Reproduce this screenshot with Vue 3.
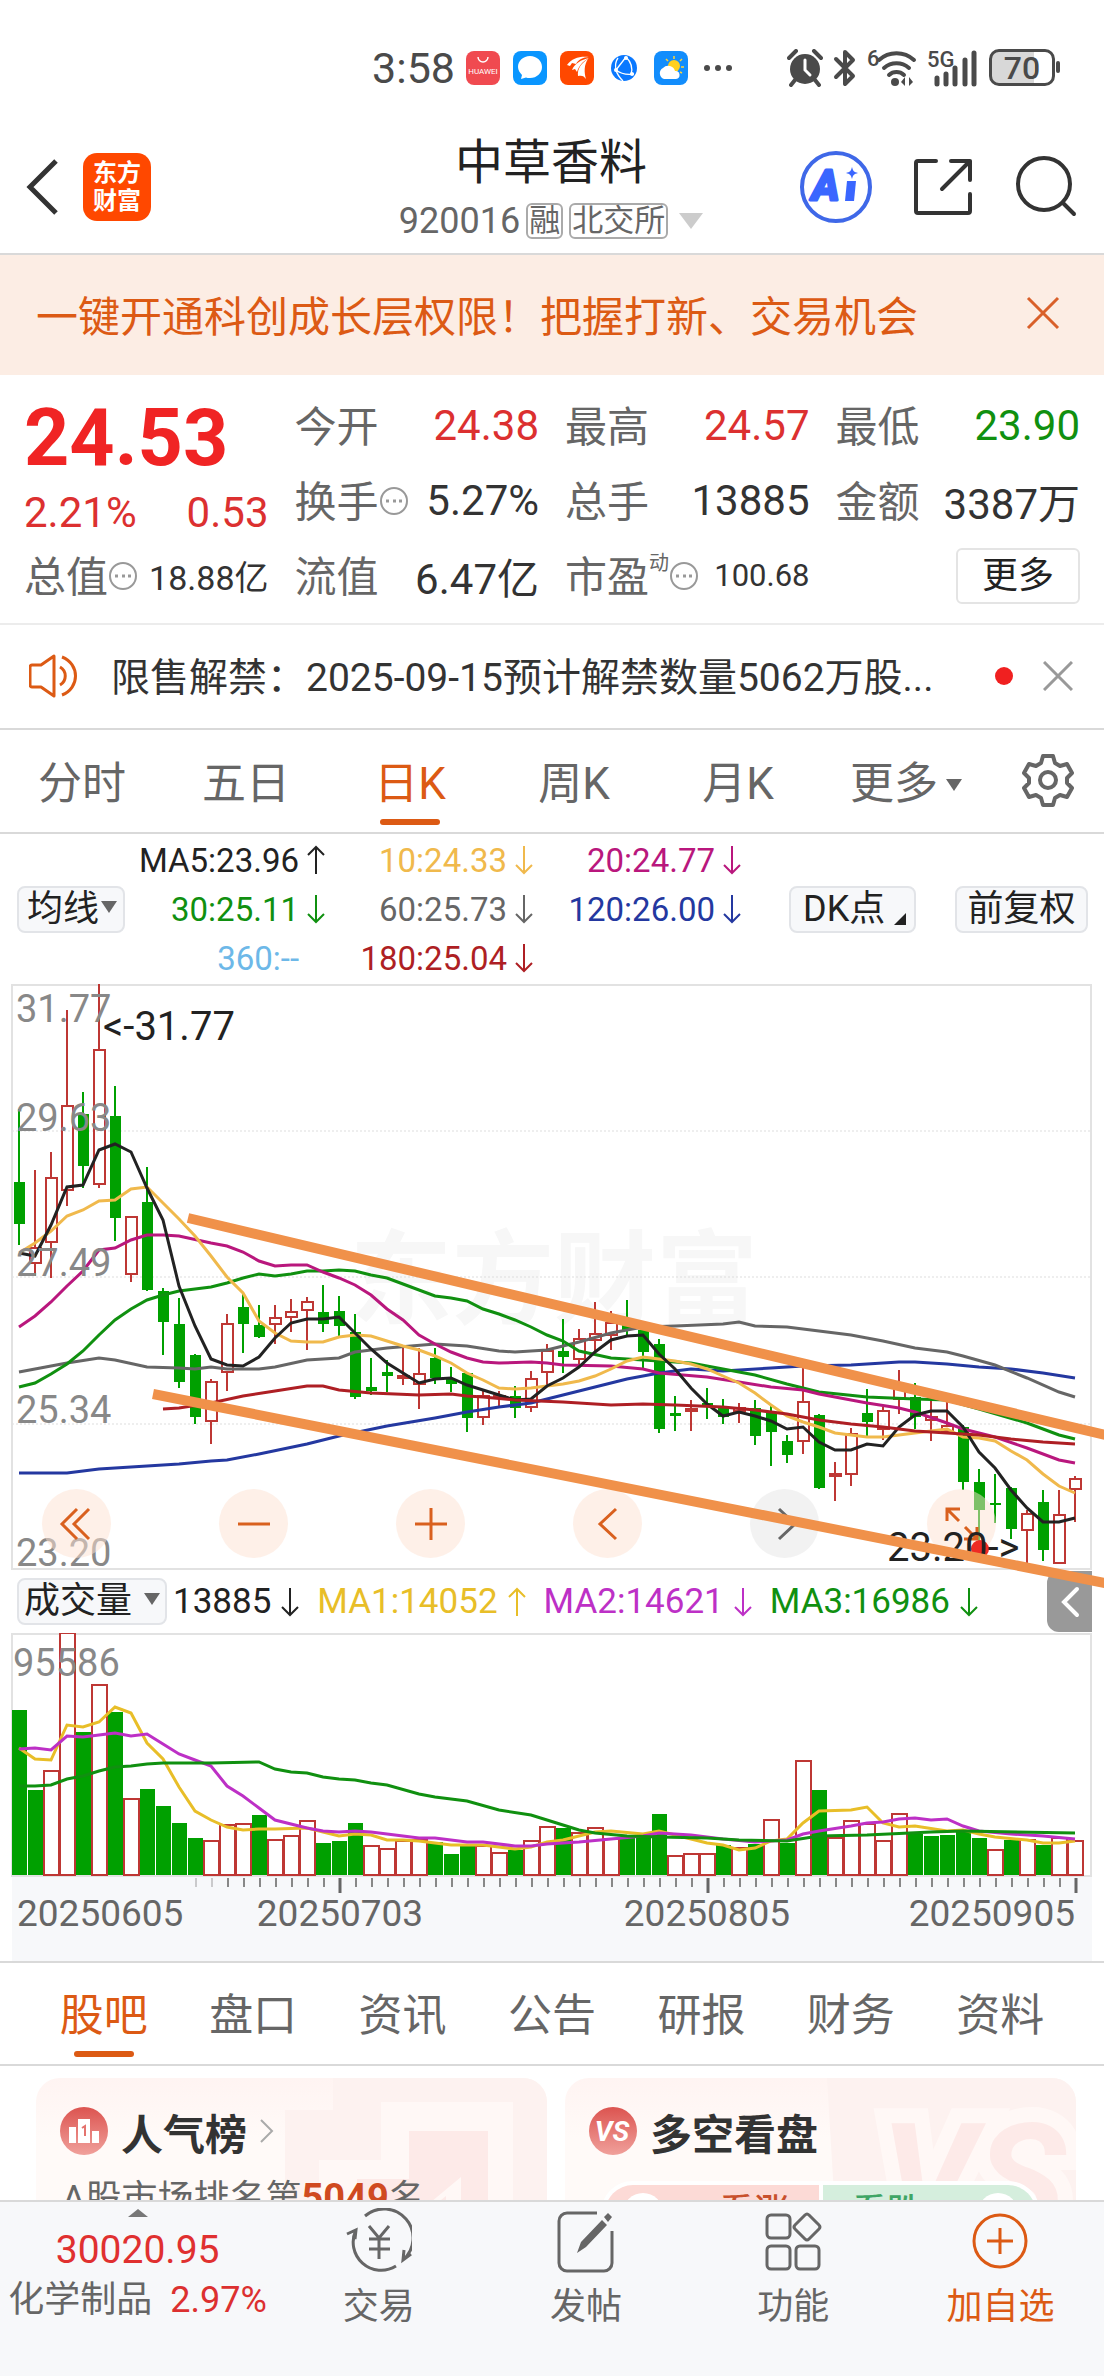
<template>
  <div class="app">
    <div class="status-bar">
      <span class="time">3:58</span>
      <div class="status-apps">
        <svg width="34" height="34" viewBox="0 0 34 34">
          <rect width="34" height="34" rx="8" fill="#f04a50" />
          <path d="M12 6a5 5 0 0 0 10 0" fill="none" stroke="#fff" stroke-width="1.4" />
          <text x="17" y="23" class="huawei">HUAWEI</text>
        </svg>
        <svg width="34" height="34" viewBox="0 0 34 34">
          <rect width="34" height="34" rx="8" fill="#0a96ff" />
          <path d="M17 5c7 0 12 5 12 11s-5 11-12 11c-2 0-3 0-4-.500L8 28l1-4c-2-2-4-5-4-8C5 10 10 5 17 5z" fill="#fff" />
        </svg>
        <svg width="34" height="34" viewBox="0 0 34 34">
          <rect width="34" height="34" rx="8" fill="#ff4800" />
          <path d="M7 14C12 7 20 5 29 6c-6 0-11 3-13 7l-4-1-2 3z M12 19c3-7 9-10 17-12-7 4-10 8-12 14l-2-3z M18 25c-1-8 4-13 10-17-4 6-4 13-2 20-2-3-4-4-8-3z" fill="#fff" />
        </svg>
        <svg width="34" height="34" viewBox="0 0 34 34">
          <circle cx="17" cy="17" r="13" fill="#0a78ff" />
          <path d="M9 19 19 6M9 19c5 4 11 5 18 4M19 6c5 5 7 11 5 17M9 19c-1-5-1-8 2-12M9 19c1 4 4 8 7 11" fill="none" stroke="#fff" stroke-width="1.300" />
          <circle cx="9" cy="19" r="2" fill="#fff" />
          <circle cx="19" cy="7" r="2" fill="#fff" />
          <circle cx="25" cy="23" r="2" fill="#fff" />
        </svg>
        <svg width="34" height="34" viewBox="0 0 34 34">
          <rect width="34" height="34" rx="8" fill="#128dfc" />
          <path d="M20 5v3M12 8l2 2M28 8l-2 2M30 16h-3M28 22l-2-1" stroke="#ffd338" stroke-width="1.500" />
          <circle cx="20" cy="15" r="6" fill="#ffd01e" />
          <path d="M10 28a6 6 0 0 1-1-11 7 7 0 0 1 12 3 4 4 0 0 1 1 8z" fill="#fff" />
        </svg>
      </div>
      <span class="dots"><i></i><i></i><i></i></span>
      <div class="status-sys">
        <svg width="36" height="38" viewBox="0 0 36 38">
          <circle cx="18" cy="20" r="15" fill="#4a4a4a" />
          <path d="M2 9l7-7M34 9l-7-7M8 31l-4 5M28 31l4 5" stroke="#4a4a4a" stroke-width="4" stroke-linecap="round" />
          <path d="M18 11v10l5 5" fill="none" stroke="#fff" stroke-width="3" stroke-linecap="round" />
        </svg>
        <svg width="24" height="38" viewBox="0 0 24 38">
          <path d="M3 10l17 17-8 8V3l8 8L3 28" fill="none" stroke="#4a4a4a" stroke-width="4" stroke-linejoin="round" stroke-linecap="round" />
        </svg>
        <svg width="50" height="38" viewBox="0 0 50 38">
          <text x="0" y="17" class="tiny">6</text>
          <path d="M12 11a26 26 0 0 1 35 0M17 19a19 19 0 0 1 25 0M22 26a11 11 0 0 1 15 0" fill="none" stroke="#4a4a4a" stroke-width="4" stroke-linecap="round" />
          <circle cx="28" cy="33" r="4" fill="#4a4a4a" />
          <path d="M38 28v9l-4-4zM42 37v-9l4 5z" fill="#4a4a4a" />
        </svg>
        <svg width="52" height="38" viewBox="0 0 52 38">
          <text x="0" y="18" class="tiny">5G</text>
          <path d="M10 35v-6M19 35V25M28 35V19M38 35V11M47 35V4" stroke="#4a4a4a" stroke-width="5" stroke-linecap="round" />
        </svg>
        <div class="battery">70</div>
      </div>
    </div>

    <header class="header">
      <button class="icon-btn" aria-label="返回">
        <svg width="36" height="58" viewBox="0 0 36 58">
          <path d="M32 3 6 29l26 26" fill="none" stroke="#333" stroke-width="5" />
        </svg>
      </button>
      <a class="brand" href="#"><span>东方</span><span>财富</span></a>
      <div class="title-box">
        <h1>中草香料</h1>
        <div class="code-row">
          <span class="code">920016</span>
          <span class="tag">融</span>
          <span class="tag">北交所</span>
          <svg width="24" height="16" viewBox="0 0 24 16"><path d="M0 0h24L12 16z" fill="#ccc" /></svg>
        </div>
      </div>
      <div class="header-actions">
        <button class="icon-btn" aria-label="AI">
          <svg width="74" height="74" viewBox="0 0 74 74">
            <circle cx="37" cy="37" r="34" fill="none" stroke="#3f68e8" stroke-width="4" />
            <text x="13" y="50" class="ai">A</text>
            <path d="M48 31h9l-2 20h-9z" fill="#3a66ff" />
            <path d="M53 17c1 4 2 5 6 6-4 1-5 2-6 6-1-4-2-5-6-6 4-1 5-2 6-6z" fill="#3a66ff" />
          </svg>
        </button>
        <button class="icon-btn" aria-label="分享">
          <svg width="62" height="62" viewBox="0 0 62 62">
            <path d="M23 5H5a2 2 0 0 0-2 2v48a2 2 0 0 0 2 2h50a2 2 0 0 0 2-2V38M38 5h19v19M57 5 29 33" fill="none" stroke="#333" stroke-width="4" stroke-linecap="round" stroke-linejoin="round" />
          </svg>
        </button>
        <button class="icon-btn" aria-label="搜索">
          <svg width="62" height="62" viewBox="0 0 62 62">
            <circle cx="29" cy="28" r="26" fill="none" stroke="#333" stroke-width="4" />
            <path d="M48 47l11 11" stroke="#333" stroke-width="4" stroke-linecap="round" />
          </svg>
        </button>
      </div>
    </header>

    <main class="content">
      <div class="banner">
        <a href="#">一键开通科创成长层权限！把握打新、交易机会</a>
        <button class="icon-btn" aria-label="关闭">
          <svg width="34" height="34" viewBox="0 0 34 34"><path d="M2 2l30 30M32 2 2 32" stroke="#d9602a" stroke-width="3" /></svg>
        </button>
      </div>

      <section class="quote">
        <div class="price-box">
          <div class="price">24.53</div>
          <div class="change"><span>2.21%</span><span>0.53</span></div>
        </div>
        <div v-for="q in quotes" :key="q.label" class="cell">
          <span class="label">{{ q.label }}<sup v-if="q.sup">{{ q.sup }}</sup></span>
          <svg v-if="q.info" class="info" width="30" height="30" viewBox="0 0 30 30">
            <circle cx="15" cy="15" r="13" fill="none" stroke="#999" stroke-width="2" />
            <path d="M7 15h3M14 15h3M20 15h3" stroke="#999" stroke-width="3" />
          </svg>
          <span class="value" :class="[q.color, q.size]">{{ q.value }}</span>
        </div>
        <div class="cell more-cell"><button class="more-btn">更多</button></div>
      </section>

      <div class="notice">
        <svg width="52" height="46" viewBox="0 0 52 46">
          <path d="M3 12h9L25 3v40L12 34H3c-1 0-2-1-2-2V14c0-1 1-2 2-2z" fill="none" stroke="#dc5a14" stroke-width="3" stroke-linejoin="round" />
          <path d="M31 14c7 4 7 14 0 18M33 4c18 7 18 31 0 38" fill="none" stroke="#dc5a14" stroke-width="3" />
        </svg>
        <a class="notice-text" href="#">限售解禁：2025-09-15预计解禁数量5062万股...</a>
        <i class="red-dot"></i>
        <button class="icon-btn" aria-label="关闭">
          <svg width="30" height="30" viewBox="0 0 30 30"><path d="M1 1l28 28M29 1 1 29" stroke="#999" stroke-width="3" /></svg>
        </button>
      </div>

      <nav class="period-tabs">
        <button v-for="p in periods" :key="p" :class="{ active: p === period }" @click="period = p">{{ p }}</button>
        <button class="more-period">更多<i class="caret"></i></button>
        <button class="gear" aria-label="设置">
          <svg width="54" height="54" viewBox="0 0 54 54">
            <path d="M22 3h10l2 7 5 3 7-2 5 9-5 5v5l5 5-5 9-7-2-5 3-2 7H22l-2-7-5-3-7 2-5-9 5-5v-5l-5-5 5-9 7 2 5-3z" fill="none" stroke="#666" stroke-width="4" stroke-linejoin="round" />
            <circle cx="27" cy="27" r="8" fill="none" stroke="#666" stroke-width="4" />
          </svg>
        </button>
      </nav>

      <section class="legend">
        <button class="chip ma-chip">均线<i class="caret"></i></button>
        <div class="ma-grid">
          <span v-for="m in maLegend" :key="m.text" :class="m.color">
            {{ m.text }}
            <svg class="arrow" viewBox="0 0 18 30"><path :d="arrows[m.dir]" /></svg>
          </span>
        </div>
        <button class="chip dk">DK点<i class="corner"></i></button>
        <button class="chip adjust">前复权</button>
      </section>

      <section class="charts">
        <svg class="plot" viewBox="0 0 1104 586">
          <text x="350" y="332" class="watermark">东方财富</text>
          <path d="M12 147H1091M12 293H1091M12 440H1091" class="grid-line" />
          <path d="M12 1H1091V585H12z" class="frame" />
          <g v-for="(c, i) in candles" :key="i" :class="c[0] ? 'up' : 'down'">
            <path :d="`M${toX(i)} ${toY(c[1])}V${toY(c[2])}M${toX(i)} ${toY(c[3])}V${toY(c[4])}`" />
            <rect :x="toX(i) - 5" :y="toY(c[2])" width="11" :height="Math.max(toY(c[3]) - toY(c[2]), 2)" />
          </g>
          <polyline v-for="l in priceLines" :key="l.color" :points="toPoints(l.data, toY)" class="ma" :class="l.color" />
          <text v-for="t in priceTicks" :key="t.y" x="16" :y="t.y" class="tick-text">{{ t.text }}</text>
          <text x="103" y="56" class="mark">&lt;-31.77</text>
        </svg>

        <div class="tools">
          <button v-for="t in tools" :key="t.name" :class="{ off: t.off }" :aria-label="t.name">
            <svg width="36" height="36" viewBox="0 0 36 36"><path :d="t.d" /></svg>
          </button>
        </div>

        <div class="volume-head">
          <button class="chip">成交量<i class="caret"></i></button>
          <span v-for="v in volumeLegend" :key="v.text" :class="v.color">
            {{ v.text }}
            <svg class="arrow" viewBox="0 0 18 30"><path :d="arrows[v.dir]" /></svg>
          </span>
          <button class="drawer" aria-label="展开">
            <svg width="20" height="32" viewBox="0 0 20 32"><path d="M17 3 4 16l13 13" fill="none" stroke="#fff" stroke-width="4" stroke-linecap="round" /></svg>
          </button>
        </div>

        <svg class="plot" viewBox="0 0 1104 244">
          <path d="M12 1H1091V243H12z" class="frame" />
          <rect
            v-for="(v, i) in volumes"
            :key="i"
            :class="v > 0 ? 'bar-up' : 'bar-down'"
            :x="12 + i * 16"
            :y="toVolY(Math.abs(v))"
            width="15"
            :height="242 - toVolY(Math.abs(v))"
          />
          <polyline v-for="l in volumeLines" :key="l.color" :points="toPoints(l.data, toVolY)" class="ma" :class="l.color" />
          <text x="13" y="43" class="tick-text">95586</text>
        </svg>

        <svg class="plot axis" viewBox="0 0 1104 84">
          <rect x="12" width="1080" height="84" fill="#f7f8fa" />
          <path
            v-for="i in axisTicks"
            :key="i"
            :d="majors.includes(i) ? `M${toX(i) + 1} 1v15` : `M${toX(i) + 1} 1v9`"
            :class="{ major: majors.includes(i), faint: i < 13 }"
          />
          <text x="17" y="49">20250605</text>
          <text x="340" y="49" text-anchor="middle">20250703</text>
          <text x="707" y="49" text-anchor="middle">20250805</text>
          <text x="1075" y="49" text-anchor="end">20250905</text>
        </svg>

        <!-- hand-drawn channel, runs past the plot frame -->
        <svg class="trend" viewBox="0 0 1104 620">
          <circle cx="980" cy="565" r="9" fill="#ee2a24" />
          <text x="887" y="577" class="mark">23.20-&gt;</text>
          <path d="M188 234 1110 452M153 410 1110 600" />
        </svg>
      </section>

      <nav class="info-tabs">
        <button v-for="s in sections" :key="s" :class="{ active: s === section }" @click="section = s">{{ s }}</button>
      </nav>

      <section class="cards">
        <article class="card">
          <svg class="card-art" width="511" height="200" viewBox="0 0 511 200">
            <path d="M249 200V32h48V0h214v200z" fill="#fdf2f0" />
            <path d="M283 200V82h62V24h132v176z" fill="#fff8f6" />
            <path d="M321 200v-99h52V53h79v147z" fill="#fdeae8" />
            <path d="M395 124l30-25v101h-15v-82l-15 12z" fill="#fff8f6" />
          </svg>
          <h2>
            <svg width="48" height="48" viewBox="0 0 48 48">
              <defs>
                <linearGradient id="badge" x1="0" y1="0" x2="0" y2="1">
                  <stop offset="0" stop-color="#dc5450" />
                  <stop offset="1" stop-color="#f0a09b" />
                </linearGradient>
              </defs>
              <circle cx="24" cy="24" r="24" fill="url(#badge)" />
              <path d="M9 20h7v16H9zM18 12h12v24H18zM32 24h7v12h-7z" fill="#fff" />
              <path d="M22 21l3-2v10" fill="none" stroke="#e4736e" stroke-width="2" />
            </svg>
            人气榜
            <svg width="14" height="26" viewBox="0 0 14 26"><path d="M1 2l11 11L1 24" fill="none" stroke="#aaa" stroke-width="2" /></svg>
          </h2>
          <p class="rank">A股市场排名第<b>5049</b>名</p>
        </article>
        <article class="card">
          <svg class="card-art" width="511" height="200" viewBox="0 0 511 200">
            <path d="M262 0h249v200H274z" fill="#fdf2f0" />
            <text x="316" y="152" class="vs-art">VS</text>
          </svg>
          <h2>
            <svg width="48" height="48" viewBox="0 0 48 48">
              <circle cx="24" cy="24" r="24" fill="url(#badge)" />
              <text x="23" y="34" class="vs">VS</text>
            </svg>
            多空看盘
          </h2>
          <div class="vote">
            <button class="rise"><i></i>看涨</button>
            <button class="fall">看跌<i></i></button>
          </div>
        </article>
      </section>
    </main>

    <footer class="bottom-bar">
      <a class="index" href="#">
        <svg width="20" height="8" viewBox="0 0 20 8"><path d="M10 0l10 8H0z" fill="#777" /></svg>
        <span class="index-value">30020.95</span>
        <span class="index-name">化学制品<em>2.97%</em></span>
      </a>
      <button>
        <svg width="66" height="66" viewBox="0 0 66 66">
          <path d="M19 8a28 28 0 0 1 38 44M65 46l-8 6 1-10M50 58A28 28 0 0 1 10 22M1 26l9-4-1 9" />
          <path d="M23 18l10 12 10-12M23 31h21M23 41h21M33 30v21" />
        </svg>
        交易
      </button>
      <button>
        <svg width="66" height="66" viewBox="0 0 66 66">
          <path d="M44 5H14a8 8 0 0 0-8 8v42a8 8 0 0 0 8 8h37a8 8 0 0 0 8-8V23" />
          <path d="M24 45l4-11 21-22 5 5-21 22zM51 9l4-4 4 4-4 5z" fill="#666" stroke="none" />
        </svg>
        发帖
      </button>
      <button>
        <svg width="66" height="66" viewBox="0 0 66 66">
          <rect x="7" y="7" width="23" height="23" rx="4" />
          <rect x="7" y="38" width="23" height="23" rx="4" />
          <rect x="36" y="38" width="23" height="23" rx="4" />
          <path d="M45 7q2-2 4 0l10 10q2 2 0 4L49 31q-2 2-4 0L35 21q-2-2 0-4z" />
        </svg>
        功能
      </button>
      <button class="add">
        <svg width="66" height="66" viewBox="0 0 66 66">
          <circle cx="33" cy="33" r="26" />
          <path d="M33 20v26M20 33h26" />
        </svg>
        加自选
      </button>
    </footer>
  </div>
</template>

<script setup>
import { ref } from "vue";

const period = ref("日K");
const section = ref("股吧");
const periods = ["分时", "五日", "日K", "周K", "月K"];
const sections = ["股吧", "盘口", "资讯", "公告", "研报", "财务", "资料"];

const quotes = [
  { label: "今开", value: "24.38", color: "red" },
  { label: "最高", value: "24.57", color: "red" },
  { label: "最低", value: "23.90", color: "green" },
  { label: "换手", value: "5.27%", info: true },
  { label: "总手", value: "13885" },
  { label: "金额", value: "3387万" },
  { label: "总值", value: "18.88亿", info: true, size: "mid" },
  { label: "流值", value: "6.47亿" },
  { label: "市盈", value: "100.68", sup: "动", info: true, size: "small" },
];

const arrows = {
  up: "M9 29V2M1 10l8-8 8 8",
  down: "M9 1v27M1 20l8 8 8-8",
  none: "",
};
const maLegend = [
  { text: "MA5:23.96", dir: "up", color: "black" },
  { text: "10:24.33", dir: "down", color: "yellow" },
  { text: "20:24.77", dir: "down", color: "magenta" },
  { text: "30:25.11", dir: "down", color: "green" },
  { text: "60:25.73", dir: "down", color: "gray" },
  { text: "120:26.00", dir: "down", color: "blue" },
  { text: "360:--", dir: "none", color: "sky" },
  { text: "180:25.04", dir: "down", color: "wine" },
];
const volumeLegend = [
  { text: "13885", dir: "down", color: "black" },
  { text: "MA1:14052", dir: "up", color: "gold" },
  { text: "MA2:14621", dir: "down", color: "purple" },
  { text: "MA3:16986", dir: "down", color: "green" },
];
const priceTicks = [
  { text: "31.77", y: 38 },
  { text: "29.63", y: 147 },
  { text: "27.49", y: 292 },
  { text: "25.34", y: 439 },
  { text: "23.20", y: 582 },
];
const tools = [
  { name: "最左", d: "M18 3 3 18l15 15M30 3 15 18l15 15" },
  { name: "缩小", d: "M2 18h32" },
  { name: "放大", d: "M2 18h32M18 2v32" },
  { name: "左移", d: "M26 3 10 18l16 15" },
  { name: "右移", d: "M12 3l16 15-16 15", off: true },
  { name: "全屏", d: "M3 15V3h13M3 3l12 12M33 21v12H20M33 33 21 21" },
];
const majors = [20, 43, 66];
const axisTicks = Array.from({ length: 56 }, (_, i) => i + 11);

const toX = (i) => 19 + i * 16;
const toY = (v) => Math.round((v - 35) / 2.53);
const toVolY = (v) => Math.round((v - 218) / 3);

function toPoints(data, scale) {
  return data.map(([i, v]) => `${toX(i)},${scale(v)}`).join(" ");
}
const daily = (list) => list.map((v, i) => [i, v]);

// [rising, high, body top, body bottom, low]
const candles = [
  [0, 350, 535, 643, 695], [1, 505, 703, 740, 775], [1, 460, 527, 688, 778], [1, 100, 343, 556, 597],
  [0, 309, 363, 495, 550], [1, 35, 202, 542, 550], [0, 292, 368, 627, 684], [1, 623, 624, 769, 790],
  [0, 499, 587, 808, 811], [0, 805, 811, 890, 973], [0, 830, 894, 1041, 1058], [0, 971, 973, 1131, 1147],
  [1, 1035, 1041, 1140, 1198], [1, 870, 896, 1016, 1065], [0, 813, 852, 895, 968], [0, 847, 898, 928, 930],
  [1, 847, 880, 895, 945], [1, 832, 864, 878, 915], [1, 826, 839, 860, 961], [0, 797, 866, 895, 916],
  [0, 824, 862, 901, 925], [0, 870, 916, 1080, 1086], [0, 980, 1055, 1064, 1075], [0, 986, 1017, 1028, 1067],
  [1, 950, 1027, 1029, 1050], [1, 955, 1021, 1048, 1110], [0, 956, 982, 1031, 1047], [0, 1003, 1035, 1046, 1066],
  [0, 1017, 1018, 1132, 1168], [1, 1062, 1077, 1131, 1150], [1, 1065, 1077, 1080, 1103], [0, 1052, 1077, 1107, 1134],
  [1, 1013, 1034, 1106, 1117], [1, 945, 963, 1017, 1050], [0, 883, 964, 979, 1020], [1, 908, 932, 984, 1000],
  [1, 840, 921, 935, 965], [1, 862, 893, 923, 961], [0, 835, 880, 910, 925], [0, 908, 910, 966, 1006],
  [0, 933, 946, 1161, 1171], [0, 1077, 1121, 1129, 1165], [1, 1088, 1111, 1115, 1167], [0, 1056, 1094, 1106, 1136],
  [0, 1085, 1107, 1130, 1148], [1, 1094, 1108, 1115, 1145], [0, 1087, 1107, 1179, 1201], [0, 1100, 1117, 1169, 1255],
  [0, 1176, 1190, 1227, 1247], [1, 1000, 1092, 1192, 1224], [0, 1124, 1125, 1309, 1312], [1, 1244, 1275, 1279, 1343],
  [1, 1159, 1174, 1275, 1304], [0, 1060, 1120, 1143, 1178], [1, 1106, 1115, 1161, 1188], [1, 1011, 1050, 1084, 1122],
  [0, 1044, 1080, 1130, 1161], [1, 1090, 1131, 1139, 1191], [1, 1080, 1152, 1165, 1170], [0, 1150, 1155, 1295, 1315],
  [0, 1263, 1295, 1365, 1470], [0, 1275, 1347, 1352, 1399], [0, 1308, 1310, 1414, 1440], [1, 1367, 1375, 1416, 1500],
  [0, 1314, 1345, 1468, 1495], [1, 1314, 1379, 1500, 1502], [1, 1280, 1287, 1312, 1395],
];

const priceLines = [
  { color: "blue", data: [[0, 1272], [3, 1271], [4, 1268], [5, 1262], [7, 1256], [10, 1250], [12, 1243], [13, 1239], [15, 1225], [18, 1198], [20, 1178], [23, 1154], [26, 1132], [28, 1118], [30, 1106], [32, 1094], [34, 1075], [36, 1055], [38, 1035], [40, 1019], [42, 1010], [44, 1013], [47, 1006], [49, 1001], [52, 999], [55, 992], [56, 992], [58, 997], [60, 1003], [62, 1008], [64, 1018], [66, 1032]] },
  { color: "gray", data: [[0, 1017], [1, 1010], [3, 994], [5, 982], [6, 986], [8, 1003], [10, 1006], [11, 1008], [12, 1005], [13, 1008], [15, 1010], [16, 1003], [18, 986], [20, 981], [21, 966], [23, 955], [26, 945], [28, 952], [30, 963], [31, 965], [33, 960], [35, 940], [37, 917], [39, 902], [41, 899], [44, 894], [45, 891], [46, 899], [48, 903], [50, 912], [52, 922], [54, 938], [56, 956], [58, 965], [59, 977], [61, 1000], [63, 1033], [65, 1068], [66, 1079]] },
  { color: "green", data: [[0, 1054], [1, 1045], [2, 1022], [3, 996], [4, 964], [5, 922], [6, 886], [7, 856], [8, 835], [9, 821], [10, 812], [12, 801], [13, 792], [14, 780], [15, 768], [16, 774], [17, 768], [18, 761], [19, 762], [20, 758], [21, 761], [22, 770], [23, 780], [24, 794], [25, 810], [26, 824], [27, 829], [28, 838], [29, 857], [30, 871], [31, 885], [32, 902], [33, 922], [34, 938], [35, 963], [37, 980], [39, 987], [42, 993], [44, 1008], [46, 1025], [48, 1046], [50, 1067], [53, 1080], [56, 1086], [58, 1088], [60, 1110], [63, 1145], [64, 1160], [65, 1175], [66, 1186]] },
  { color: "magenta", data: [[0, 903], [1, 876], [2, 840], [3, 798], [4, 760], [5, 708], [6, 704], [7, 683], [8, 669], [9, 669], [10, 673], [12, 690], [13, 698], [14, 713], [15, 735], [16, 748], [17, 745], [18, 745], [19, 763], [20, 778], [21, 797], [22, 823], [23, 857], [24, 885], [25, 923], [26, 945], [27, 966], [28, 981], [29, 991], [30, 993], [32, 992], [33, 995], [34, 998], [37, 1001], [39, 1010], [40, 1018], [43, 1030], [45, 1041], [47, 1054], [49, 1061], [50, 1072], [53, 1096], [55, 1108], [56, 1118], [58, 1145], [59, 1160], [61, 1180], [63, 1210], [65, 1240], [66, 1246]] },
  { color: "yellow", data: daily([715, 690, 660, 621, 608, 583, 582, 553, 549, 590, 630, 672, 722, 776, 817, 887, 917, 938, 941, 941, 928, 923, 925, 938, 950, 962, 976, 993, 1020, 1038, 1056, 1060, 1057, 1052, 1048, 1040, 1028, 1010, 990, 978, 984, 990, 997, 1010, 1026, 1044, 1070, 1100, 1128, 1142, 1157, 1170, 1177, 1181, 1180, 1175, 1170, 1165, 1160, 1180, 1184, 1192, 1216, 1240, 1274, 1306, 1322]) },
  { color: "black", data: daily([715, 722, 645, 548, 543, 455, 440, 459, 550, 632, 800, 900, 984, 1000, 1001, 979, 930, 892, 882, 882, 878, 918, 958, 993, 1020, 1045, 1035, 1031, 1050, 1062, 1075, 1087, 1086, 1052, 1032, 1005, 967, 936, 925, 923, 970, 1010, 1056, 1097, 1127, 1119, 1127, 1140, 1162, 1155, 1194, 1214, 1215, 1198, 1203, 1155, 1125, 1116, 1116, 1155, 1218, 1260, 1315, 1360, 1395, 1397, 1386]) },
  { color: "wine", data: [[9, 1109], [10, 1108], [12, 1094], [14, 1077], [16, 1064], [18, 1051], [19, 1053], [20, 1062], [22, 1069], [25, 1074], [27, 1073], [28, 1077], [29, 1081], [31, 1087], [34, 1092], [37, 1101], [39, 1098], [41, 1101], [44, 1106], [46, 1112], [48, 1123], [50, 1137], [52, 1148], [54, 1155], [56, 1166], [57, 1168], [60, 1177], [62, 1187], [64, 1195], [66, 1199]] },
];

// bar tops, negative for a falling day
const volumes = [
  -449, -690, 632, 219, -515, 374, -456, 716, -687, -738, -787, -834, 843, 795, 790, -765, 838, 828, 783, -849,
  -841, -789, 858, 866, 842, 840, -845, -882, -857, 858, 879, -870, 842, 800, -803, 818, 802, 835, -833, -830,
  -760, 887, 880, 880, -853, 862, -850, 779, -849, 603, -690, 833, 781, 790, 843, 760, -820, -826, -823, -815,
  -833, 868, -838, 838, -853, 832, 841,
];

const volumeLines = [
  { color: "gold", data: [[0, 563], [1, 596], [2, 598], [3, 494], [4, 500], [5, 486], [6, 440], [7, 457], [8, 548], [9, 596], [10, 680], [11, 753], [12, 778], [13, 800], [14, 809], [15, 806], [16, 806], [18, 802], [19, 815], [20, 827], [21, 821], [22, 825], [23, 840], [24, 839], [25, 843], [26, 849], [27, 853], [29, 853], [31, 865], [32, 860], [33, 845], [34, 838], [36, 815], [37, 813], [39, 821], [40, 813], [41, 825], [42, 837], [43, 847], [44, 853], [45, 870], [46, 862], [47, 842], [48, 835], [49, 788], [50, 751], [52, 750], [53, 739], [54, 787], [55, 800], [56, 797], [58, 812], [59, 808], [60, 820], [61, 831], [63, 838], [64, 847], [65, 847], [66, 842]] },
  { color: "purple", data: [[0, 567], [1, 564], [2, 569], [3, 526], [4, 529], [5, 524], [6, 518], [7, 527], [8, 522], [9, 550], [10, 582], [11, 598], [12, 618], [13, 677], [14, 706], [15, 744], [16, 780], [18, 802], [19, 812], [20, 816], [21, 812], [22, 814], [24, 827], [25, 832], [26, 833], [28, 845], [29, 846], [31, 858], [32, 856], [33, 850], [35, 844], [37, 836], [39, 828], [40, 819], [42, 825], [44, 836], [46, 845], [48, 838], [49, 820], [50, 811], [52, 796], [53, 788], [54, 786], [55, 775], [56, 773], [57, 778], [58, 776], [59, 797], [60, 812], [62, 822], [64, 828], [66, 835]] },
  { color: "green", data: [[0, 678], [1, 678], [2, 674], [3, 657], [4, 648], [5, 632], [6, 620], [7, 616], [8, 610], [9, 608], [12, 608], [15, 604], [16, 626], [17, 636], [18, 639], [19, 649], [20, 656], [21, 658], [22, 667], [23, 674], [25, 700], [26, 711], [28, 723], [30, 750], [32, 763], [33, 780], [34, 793], [35, 808], [36, 817], [38, 826], [40, 830], [43, 834], [45, 840], [48, 841], [50, 826], [53, 823], [57, 816], [59, 813], [66, 818]] },
];
</script>

<style>
body {
  margin: 0;
  background: #fff;
}
</style>

<style scoped>
.app {
  display: flex;
  flex-direction: column;
  height: 100vh;
  background: #fff;
  color: #333;
  font-family: Roboto, "Noto Sans CJK SC", sans-serif;
  font-size: 36px;
}
.app * {
  box-sizing: border-box;
}
svg {
  flex-shrink: 0;
}
button {
  border: 0;
  padding: 0;
  background: none;
  color: inherit;
  font: inherit;
  cursor: pointer;
}
a {
  color: inherit;
  text-decoration: none;
}
i,
em {
  font-style: normal;
}
.icon-btn {
  display: flex;
}

.black { color: #222; }
.yellow { color: #f0b94c; }
.magenta { color: #b9177d; }
.green { color: #109010; }
.gray { color: #666; }
.blue { color: #2438a0; }
.sky { color: #6db8e8; }
.wine { color: #ae1f24; }
.gold { color: #e8be28; }
.purple { color: #bd30c6; }
.red { color: #dc3030; }

.status-bar {
  display: flex;
  align-items: center;
  justify-content: flex-end;
  height: 120px;
  padding: 15px 49px 0 0;
  color: #4a4a4a;
}
.time {
  font-size: 43px;
}
.status-apps {
  display: flex;
  gap: 13px;
  margin-left: 11px;
}
.dots {
  display: flex;
  gap: 5px;
  margin: 0 55px 0 16px;
}
.dots i {
  width: 6px;
  height: 6px;
  border-radius: 50%;
  background: #4a4a4a;
}
.status-sys {
  display: flex;
  align-items: center;
  gap: 10px;
}
.huawei {
  font-size: 8px;
  fill: #fff;
  text-anchor: middle;
}
.tiny {
  font-size: 22px;
  font-weight: 500;
  fill: #4a4a4a;
}
.battery {
  position: relative;
  width: 66px;
  height: 37px;
  border: 3px solid #4a4a4a;
  border-radius: 10px;
  background: linear-gradient(90deg, #d8d8d8 70%, #fff 70%);
  font-size: 32px;
  font-weight: 500;
  line-height: 32px;
  text-align: center;
}
.battery::after {
  content: "";
  position: absolute;
  top: 9px;
  right: -8px;
  width: 4px;
  height: 12px;
  border-radius: 2px;
  background: #4a4a4a;
}

.header {
  display: flex;
  align-items: center;
  height: 135px;
  padding: 0 27px 0 24px;
  border-bottom: 2px solid #d9d9d9;
}
.brand {
  display: flex;
  flex-direction: column;
  align-items: center;
  justify-content: center;
  width: 68px;
  height: 68px;
  margin-left: 23px;
  border-radius: 14px;
  background: #ff4800;
  color: #fff;
  font-size: 24px;
  font-weight: 700;
  line-height: 28px;
}
.title-box {
  display: flex;
  flex: 1;
  flex-direction: column;
  align-items: center;
  gap: 12px;
  padding-left: 152px;
}
h1 {
  margin: 0;
  color: #222;
  font-size: 48px;
  font-weight: 400;
  line-height: 56px;
}
.code-row {
  display: flex;
  align-items: center;
  gap: 6px;
  color: #666;
  line-height: 36px;
}
.tag {
  padding: 0 1px;
  border: 2px solid #aaa;
  border-radius: 6px;
  font-size: 31px;
  line-height: 32px;
}
.code-row svg {
  margin-left: 5px;
}
.header-actions {
  display: flex;
  align-items: center;
  gap: 40px;
}
.ai {
  fill: #3a66ff;
  stroke: #3a66ff;
  stroke-width: 3;
  stroke-linejoin: round;
  font-size: 42px;
  font-style: italic;
  font-weight: 700;
}

.content {
  flex: 1;
  min-height: 0;
  overflow: hidden auto;
  scrollbar-width: none;
}
.banner {
  display: flex;
  align-items: center;
  justify-content: space-between;
  height: 120px;
  padding: 0 44px 4px 36px;
  background: #fcede4;
  color: #dc5a14;
  font-size: 42px;
}

.quote {
  display: grid;
  grid-template-columns: repeat(4, 1fr);
  grid-auto-rows: 75px;
  column-gap: 26px;
  padding: 13px 24px 10px;
  border-bottom: 2px solid #ececec;
}
.price-box {
  grid-row: span 2;
  padding-top: 8px;
  color: #f02424;
}
.price {
  font-size: 79px;
  font-weight: 700;
  line-height: 84px;
}
.change {
  display: flex;
  justify-content: space-between;
  color: #dc3030;
  font-size: 42px;
  line-height: 66px;
}
.cell {
  display: flex;
  align-items: center;
  white-space: nowrap;
}
.label {
  margin-bottom: 4px;
  color: #666;
  font-size: 42px;
}
.label sup {
  font-size: 20px;
  line-height: 20px;
  vertical-align: 22px;
}
.value {
  margin-left: auto;
  font-size: 42px;
}
.value.mid {
  font-size: 34px;
}
.value.small {
  font-size: 31px;
}
.more-cell {
  justify-content: flex-end;
}
.more-btn {
  width: 124px;
  height: 56px;
  border: 2px solid #e4e4e4;
  border-radius: 6px;
  color: #222;
  line-height: 48px;
}

.notice {
  display: flex;
  align-items: center;
  height: 105px;
  padding: 0 31px 2px 29px;
  border-bottom: 2px solid #d9d9d9;
}
.notice-text {
  flex: 1;
  margin: 0 0 4px 30px;
  font-size: 39px;
}
.red-dot {
  width: 18px;
  height: 18px;
  margin-right: 30px;
  border-radius: 50%;
  background: #f02020;
}

.period-tabs {
  display: flex;
  height: 104px;
  border-bottom: 2px solid #d9d9d9;
}
.period-tabs button {
  flex: 164;
}
.period-tabs button,
.info-tabs button {
  position: relative;
  padding-bottom: 3px;
  color: #666;
  font-size: 44px;
}
.period-tabs .more-period {
  flex: 172;
}
.period-tabs .gear {
  display: flex;
  flex: 112;
  align-items: center;
  justify-content: center;
}
.period-tabs .active,
.info-tabs .active {
  color: #dc5a14;
}
.period-tabs .active::after,
.info-tabs .active::after {
  content: "";
  position: absolute;
  bottom: 7px;
  left: 50%;
  width: 60px;
  height: 6px;
  margin-left: -30px;
  border-radius: 3px;
  background: #dc5a14;
}
.caret {
  display: inline-block;
  margin-left: 8px;
  border: solid transparent;
  border-width: 12px 8px 0;
  border-top-color: #666;
  vertical-align: 8px;
}

.legend {
  display: flex;
  align-items: center;
  height: 150px;
  padding: 0 16px 0 17px;
}
.chip {
  height: 47px;
  padding: 0 8px;
  border: 2px solid #e2e4e8;
  border-radius: 8px;
  background: #f7f8fa;
  color: #222;
  font-size: 36px;
  line-height: 39px;
  white-space: nowrap;
}
.ma-chip {
  width: 108px;
}
.ma-chip .caret {
  margin-left: 2px;
}
.ma-grid {
  display: grid;
  grid-template-columns: 188px 172px 172px;
  gap: 0 36px;
  margin: 0 auto 0 12px;
  font-size: 33px;
  line-height: 49px;
}
.ma-grid span {
  display: flex;
  align-items: center;
  justify-content: flex-end;
  gap: 8px;
  white-space: nowrap;
}
.arrow {
  width: 18px;
  height: 30px;
  fill: none;
  stroke: currentColor;
  stroke-width: 2;
}
.dk {
  width: 127px;
  margin-right: 39px;
  padding: 0 3px 0 12px;
  text-align: left;
}
.adjust {
  width: 133px;
}
.corner {
  display: inline-block;
  margin-left: 9px;
  border: solid transparent;
  border-width: 0 0 12px 12px;
  border-bottom-color: #222;
  vertical-align: -4px;
}

.charts {
  position: relative;
}
.plot {
  display: block;
  width: 100%;
}
.frame {
  fill: none;
  stroke: #e2e2e2;
  stroke-width: 2;
}
.grid-line {
  stroke: #ddd;
  stroke-dasharray: 2 2;
}
.watermark {
  fill: #f7f7f7;
  font-size: 102px;
  font-weight: 700;
}
.up path,
.up rect {
  fill: none;
  stroke: #be3734;
  stroke-width: 2;
}
.down path {
  stroke: #00a000;
  stroke-width: 2;
}
.down rect {
  fill: #00a000;
}
.ma {
  fill: none;
  stroke: currentColor;
  stroke-width: 3;
}
.tick-text {
  fill: #888;
  font-size: 38px;
}
.mark {
  fill: #222;
  font-size: 40px;
}
.bar-up {
  fill: #fff;
  stroke: #be3734;
  stroke-width: 2;
}
.bar-down {
  fill: #00a000;
}
.tools {
  position: absolute;
  top: 505px;
  right: 108px;
  left: 42px;
  display: flex;
  justify-content: space-between;
}
.tools button {
  display: flex;
  align-items: center;
  justify-content: center;
  width: 69px;
  height: 69px;
  border-radius: 50%;
  background: rgba(253, 225, 210, 0.5);
}
.tools path {
  fill: none;
  stroke: #d9601e;
  stroke-width: 3;
}
.tools .off {
  background: rgba(230, 230, 230, 0.5);
}
.tools .off path {
  stroke: #666;
}
.volume-head {
  display: flex;
  align-items: center;
  gap: 18px;
  height: 63px;
  padding: 0 12px 0 17px;
  font-size: 35px;
}
.volume-head .chip {
  width: 150px;
  margin-right: -12px;
  padding: 0 5px;
}
.volume-head .caret {
  margin-left: 12px;
}
.volume-head span {
  display: flex;
  align-items: center;
  gap: 10px;
}
.drawer {
  display: flex;
  align-items: center;
  justify-content: center;
  width: 45px;
  height: 61px;
  margin-left: auto;
  border-radius: 12px 0 0 12px;
  background: #999;
}
.axis path {
  stroke: #888;
  stroke-width: 2;
}
.axis .major {
  stroke: #666;
  stroke-width: 3;
}
.axis .faint {
  opacity: 0.4;
}
.axis text {
  fill: #666;
  font-size: 37px;
}
.trend {
  position: absolute;
  top: 0;
  left: 0;
  width: 100%;
  pointer-events: none;
}
.trend path {
  stroke: #f0914a;
  stroke-width: 10;
}

.info-tabs {
  display: flex;
  height: 105px;
  padding: 0 29px;
  border-top: 2px solid #d9d9d9;
  border-bottom: 2px solid #d9d9d9;
}
.info-tabs button {
  flex: 1;
}
.cards {
  display: grid;
  grid-template-columns: 1fr 1fr;
  gap: 18px;
  padding: 12px 28px 24px 36px;
}
.card {
  position: relative;
  height: 200px;
  padding: 24px 24px 0;
  border-radius: 24px;
  overflow: hidden;
  background: linear-gradient(#fff4f2, #fffaf8 60px);
}
.card-art {
  position: absolute;
  top: 0;
  right: 0;
}
.card h2 {
  position: relative;
  display: flex;
  align-items: center;
  gap: 13px;
  height: 58px;
  margin: 0;
  font-size: 42px;
  font-weight: 700;
}
.vs {
  fill: #fff;
  font-size: 28px;
  font-style: italic;
  font-weight: 700;
  text-anchor: middle;
}
.vs-art {
  fill: #fdeae8;
  stroke: #fff8f6;
  stroke-width: 30;
  paint-order: stroke;
  font-size: 150px;
  font-style: italic;
  font-weight: 700;
}
.rank {
  position: relative;
  margin: 16px 0 0 2px;
  color: #666;
  line-height: 44px;
}
.rank b {
  color: #d04a20;
  font-size: 38px;
}
.vote {
  position: relative;
  display: flex;
  gap: 4px;
  margin: 21px 12px 0;
  border: 4px solid #fff;
  border-radius: 36px;
  overflow: hidden;
  background: #fff;
}
.vote button {
  display: flex;
  flex: 1;
  align-items: center;
  gap: 56px;
  height: 56px;
  padding: 0 18px;
  font-size: 35px;
  font-weight: 500;
  line-height: 50px;
}
.vote i {
  width: 40px;
  height: 40px;
  border-radius: 50%;
  background: #fff;
}
.vote .rise {
  background: #fcdad6;
  color: #c8502c;
}
.vote .fall {
  justify-content: flex-end;
  background: #d5eedd;
  color: #3fa565;
}

.bottom-bar {
  display: flex;
  height: 176px;
  border-top: 2px solid #d9d9d9;
  background: #f7f8fa;
  color: #666;
}
.index {
  display: flex;
  flex: 275;
  flex-direction: column;
  align-items: center;
  padding-top: 7px;
  white-space: nowrap;
}
.index-value {
  margin-top: 8px;
  color: #e03030;
  font-size: 39px;
  line-height: 50px;
}
.index-name {
  line-height: 50px;
}
.index-name em {
  margin-left: 18px;
  color: #dc3030;
}
.bottom-bar button {
  display: flex;
  flex: 207;
  flex-direction: column;
  align-items: center;
  padding-top: 6px;
  line-height: 66px;
}
.bottom-bar button svg {
  fill: none;
  stroke: #666;
  stroke-width: 3;
}
.bottom-bar .add {
  color: #dc5a14;
}
.bottom-bar .add svg {
  stroke: #dc5a14;
}
</style>
